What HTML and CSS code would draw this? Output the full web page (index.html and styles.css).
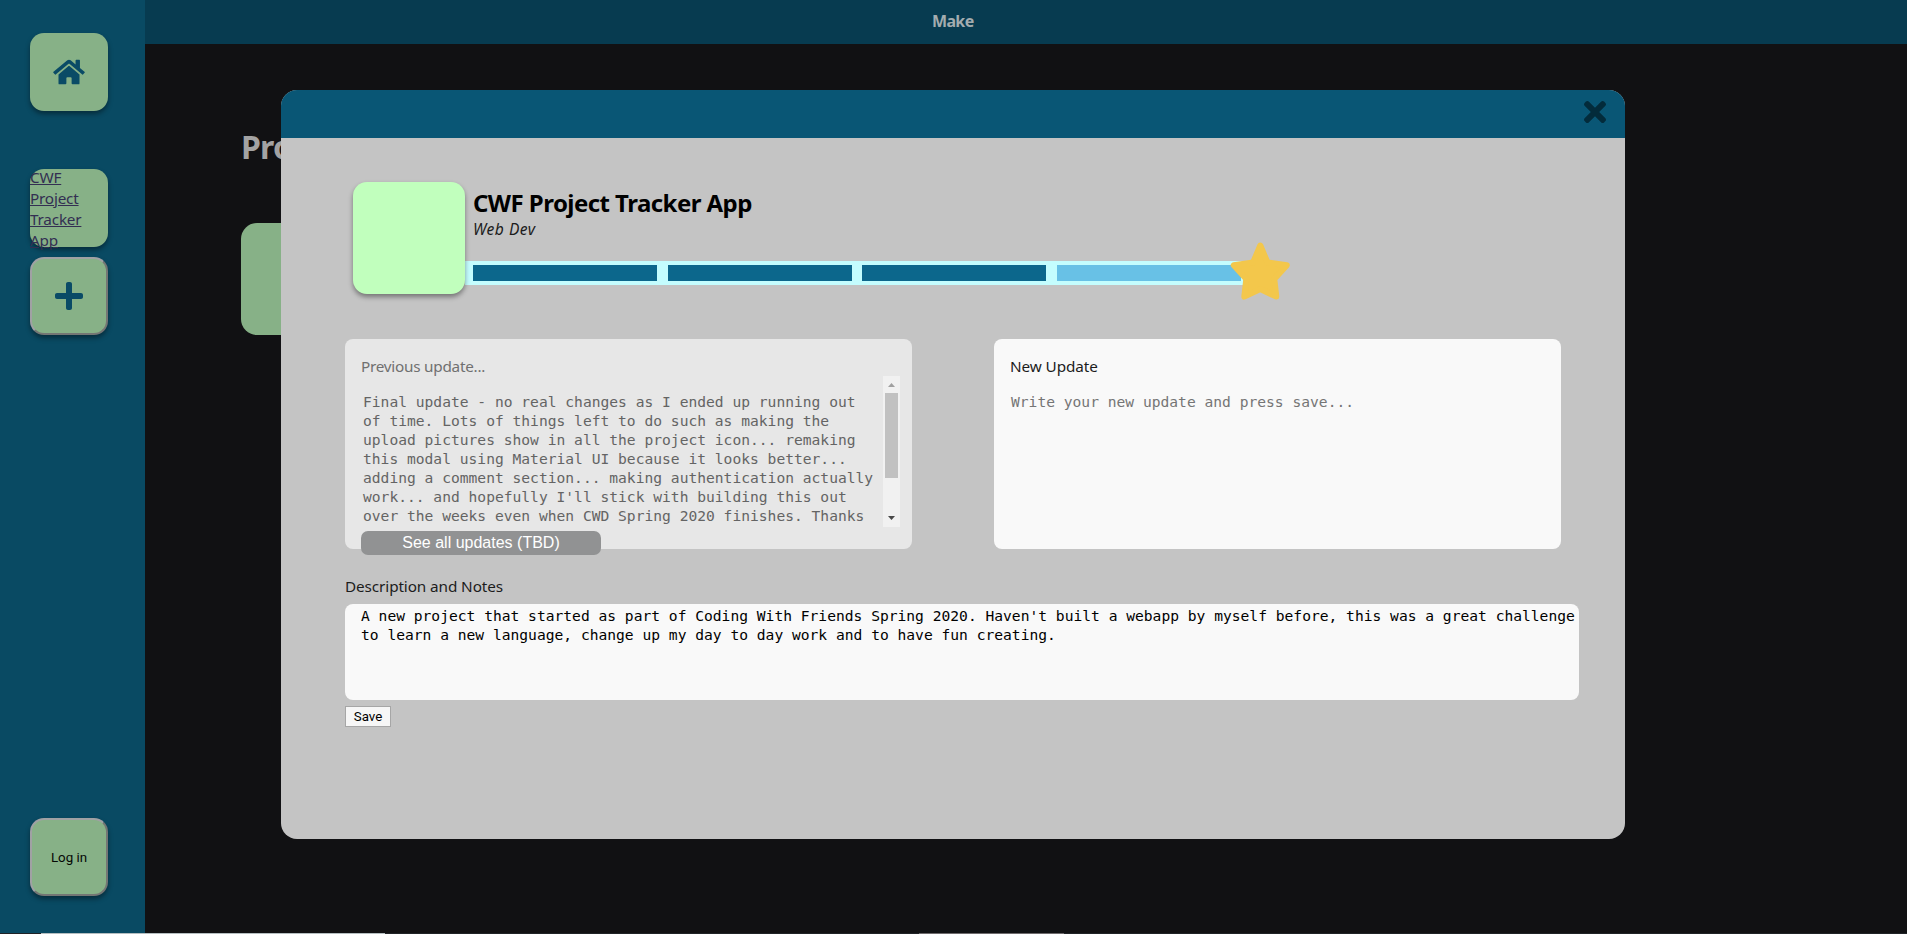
FILE: index.html
```html
<!DOCTYPE html>
<html lang="en">
<head>
<meta charset="utf-8">
<title>Make</title>
<link rel="stylesheet" href="styles.css">
</head>
<body>
<div class="app">
  <nav class="sidebar">
    <a class="tile home" href="#"><svg width="32" height="28" viewBox="0 0 576 512"><path fill="currentColor" d="M280.370 148.260L96 300.110V464a16 16 0 0 0 16 16l112.060-.29a16 16 0 0 0 15.920-16V368a16 16 0 0 1 16-16h64a16 16 0 0 1 16 16v95.640a16 16 0 0 0 16 16.050L464 480a16 16 0 0 0 16-16V300L295.670 148.260a12.190 12.190 0 0 0-15.300 0zM571.600 251.470L488 182.560V44.050a12 12 0 0 0-12-12h-56a12 12 0 0 0-12 12v72.610L318.470 43a48 48 0 0 0-61 0L4.340 251.470a12 12 0 0 0-1.600 16.900l25.500 31A12 12 0 0 0 45.150 301l235.220-193.740a12.190 12.190 0 0 1 15.300 0L530.900 301a12 12 0 0 0 16.900-1.600l25.500-31a12 12 0 0 0-1.700-16.930z"/></svg></a>
    <a class="tile project" href="#">CWF<br>Project<br>Tracker<br>App</a>
    <button class="tile raised"><svg width="28" height="32" viewBox="0 0 448 512"><path fill="currentColor" d="M416 208H272V64c0-17.670-14.330-32-32-32h-32c-17.670 0-32 14.330-32 32v144H32c-17.670 0-32 14.330-32 32v32c0 17.670 14.330 32 32 32h144v144c0 17.670 14.330 32 32 32h32c17.670 0 32-14.330 32-32V304h144c17.670 0 32-14.330 32-32v-32c0-17.670-14.330-32-32-32z"/></svg></button>
    <button class="tile raised login">Log in</button>
  </nav>
  <div class="page">
    <header class="topbar">Make</header>
    <main class="content">
      <h1 class="heading">Projects</h1>
      <div class="card"></div>
    </main>
  </div>
</div>

<section class="modal">
  <header class="modal-head"><svg width="22" height="32" viewBox="0 0 352 512"><path fill="currentColor" d="M242.720 256l100.070-100.070c12.280-12.280 12.280-32.190 0-44.480l-22.240-22.240c-12.280-12.280-32.190-12.280-44.480 0L176 189.280 75.930 89.210c-12.280-12.280-32.190-12.280-44.480 0L9.210 111.450c-12.280 12.280-12.280 32.190 0 44.480L109.280 256 9.210 356.070c-12.280 12.280-12.280 32.190 0 44.480l22.240 22.240c12.280 12.280 32.200 12.280 44.480 0L176 322.720l100.070 100.070c12.280 12.280 32.200 12.280 44.480 0l22.240-22.240c12.280-12.280 12.280-32.190 0-44.480L242.720 256z"/></svg></header>
  <div class="modal-body">
    <div class="summary">
      <div class="thumb"></div>
      <div class="info">
        <h2 class="title">CWF Project Tracker App</h2>
        <p class="kind">Web Dev</p>
        <div class="progress">
          <div class="step"></div><div class="step"></div><div class="step"></div><div class="step current"></div>
          <svg class="star" width="62" height="60" viewBox="0 0 62 60"><path d="M31.300 3.500L38.500 20.500L57.800 23.200L45.300 37L47.300 54.600L31.300 47L15.300 54.600L17.300 37L4.800 23.200L24.100 20.500Z" fill="#f3c74b" stroke="#f3c74b" stroke-width="6" stroke-linejoin="round"/></svg>
        </div>
      </div>
    </div>
    <div class="updates">
      <div class="panel previous">
        <p class="label prev-label">Previous update...</p>
        <div class="scroller">
          <div class="mono">Final update - no real changes as I ended up running out
of time. Lots of things left to do such as making the
upload pictures show in all the project icon... remaking
this modal using Material UI because it looks better...
adding a comment section... making authentication actually
work... and hopefully I'll stick with building this out
over the weeks even when CWD Spring 2020 finishes. Thanks</div>
          <div class="track">
            <svg width="17" height="17"><path d="M5 11l3.500-4l3.500 4z" fill="#a0a0a0"/></svg>
            <div class="grip"></div>
            <svg class="down" width="17" height="17"><path d="M5 6h7l-3.500 4z" fill="#484848"/></svg>
          </div>
        </div>
        <button class="all">See all updates (TBD)</button>
      </div>
      <div class="panel">
        <p class="label new-label">New Update</p>
        <div class="mono placeholder">Write your new update and press save...</div>
      </div>
    </div>
    <p class="label notes-label">Description and Notes</p>
    <div class="notes mono">A new project that started as part of Coding With Friends Spring 2020. Haven't built a webapp by myself before, this was a great challenge
to learn a new language, change up my day to day work and to have fun creating.</div>
    <button class="save">Save</button>
  </div>
</section>
<div class="edge"><i class="edge-a"></i><i class="edge-b"></i></div>
</body>
</html>
```
FILE: styles.css
```css
* { box-sizing: border-box; }
body { margin: 0; height: 934px; overflow: hidden; background: #111113; color: #000; font-family: "Noto Sans", "Open Sans", sans-serif; font-size: 16px; }
p, h1, h2 { margin: 0; }
.app { display: flex; height: 934px; }
.sidebar { width: 145px; padding: 33px 30px 38px; background: #094a63; display: flex; flex-direction: column; }
.tile { display: flex; flex: none; align-items: center; justify-content: center; width: 78px; height: 78px; padding: 0; border-radius: 14px; background: #87b187; color: #0a4b66; box-shadow: 0 3px 5px rgba(0, 0, 0, .4); }
.project { display: block; margin: 58px 0 10px; color: #332f52; font-size: 15.300px; line-height: 21px; text-decoration: underline; letter-spacing: -.2px; }
.project::before { content: ""; display: block; margin-top: -2px; }
.home { padding-right: 1px; }
.raised { border: 2px solid; border-color: #a0a1a4 #747674 #747674 #a0a1a4; }
.login { margin-top: auto; color: #050805; font: 13.330px Roboto, sans-serif; }
.page { flex: 1; }
.topbar { height: 44px; padding-left: 787px; background: #073b50; color: #a3acaf; font-weight: 700; line-height: 43px; letter-spacing: -.650px; }
.content { padding: 81px 96px; }
.heading { height: 98px; color: #a3a3a3; font-size: 32px; line-height: 43px; letter-spacing: -.8px; }
.card { width: 112px; height: 112px; border-radius: 16px; background: #87b187; }

.modal { position: absolute; left: 281px; top: 90px; width: 1344px; height: 749px; border-radius: 16px; overflow: hidden; background: #c4c4c4; }
.modal-head { display: flex; justify-content: flex-end; height: 48px; padding: 6px 19px 0; background: #095675; color: #032b3b; }
.modal-body { padding: 44px 46px 0 64px; }
.summary { display: flex; height: 157px; padding-left: 8px; }
.thumb { z-index: 1; width: 112px; height: 112px; border-radius: 14px; background: #c1ffbd; box-shadow: 0 3px 5px rgba(0, 0, 0, .4); }
.info { width: 778px; padding-top: 4px; }
.title { padding-left: 8px; font-size: 24px; line-height: 33px; white-space: nowrap; letter-spacing: -.550px; }
.kind { height: 42px; padding-left: 8px; color: #1c1c1c; font-size: 15.600px; font-style: italic; line-height: 20px; letter-spacing: .5px; }
.progress { position: relative; display: flex; gap: 10.700px; height: 24px; padding: 4px 2px 4px 8px; background: #c4fdfe; }
.step { flex: 1; background: #0c678c; }
.current { background: #68c1e6; }
.star { position: absolute; left: 764px; top: -19px; }
.updates { display: flex; justify-content: space-between; width: 1216px; height: 210px; }
.panel { width: 567px; height: 210px; padding: 16px 12px 0 16px; border-radius: 8px; background: #f9f9f9; }
.previous { background: #e7e7e7; color: #646464; }
.label { font-size: 15.300px; line-height: 23px; height: 21px; white-space: nowrap; letter-spacing: -.1px; }
.new-label, .notes-label { color: #1c1c1c; }
.prev-label { color: #707070; letter-spacing: -.250px; }
.mono { font-family: "DejaVu Sans Mono", monospace; font-size: 14.620px; line-height: 19px; white-space: pre; }
.scroller { display: flex; justify-content: space-between; height: 155px; padding-left: 2px; overflow: hidden; }
.scroller .mono { padding-top: 16px; }
.track { display: flex; flex-direction: column; align-items: center; width: 17px; height: 151px; background: #f1f1f1; }
.grip { width: 13px; height: 85px; background: #c1c1c1; }
.down { margin-top: auto; }
.all { display: block; width: 240px; height: 24px; padding: 0; border: 0; border-radius: 7px; background: #919293; color: #fff; font: 16px "Liberation Sans", sans-serif; }
.placeholder { padding: 16px 0 0 1px; color: #757575; }
.notes-label { padding-top: 26px; height: 55px; }
.notes { width: 1234px; height: 96px; padding: 2px 0 0 16px; border-radius: 8px; background: #f9f9f9; }
.save { display: block; width: 46px; height: 21px; margin-top: 6px; padding: 0; border: 1px solid #a6a6a6; background: #f6f6f6; font: 13.330px Roboto, sans-serif; }
.edge { position: absolute; left: 0; top: 933px; width: 1907px; height: 1px; display: flex; background: #202326; padding-left: 41px; gap: 534px; }
.edge-a { width: 344px; background: #b5bec0; }
.edge-b { width: 145px; background: #6e6b6d; }
```
